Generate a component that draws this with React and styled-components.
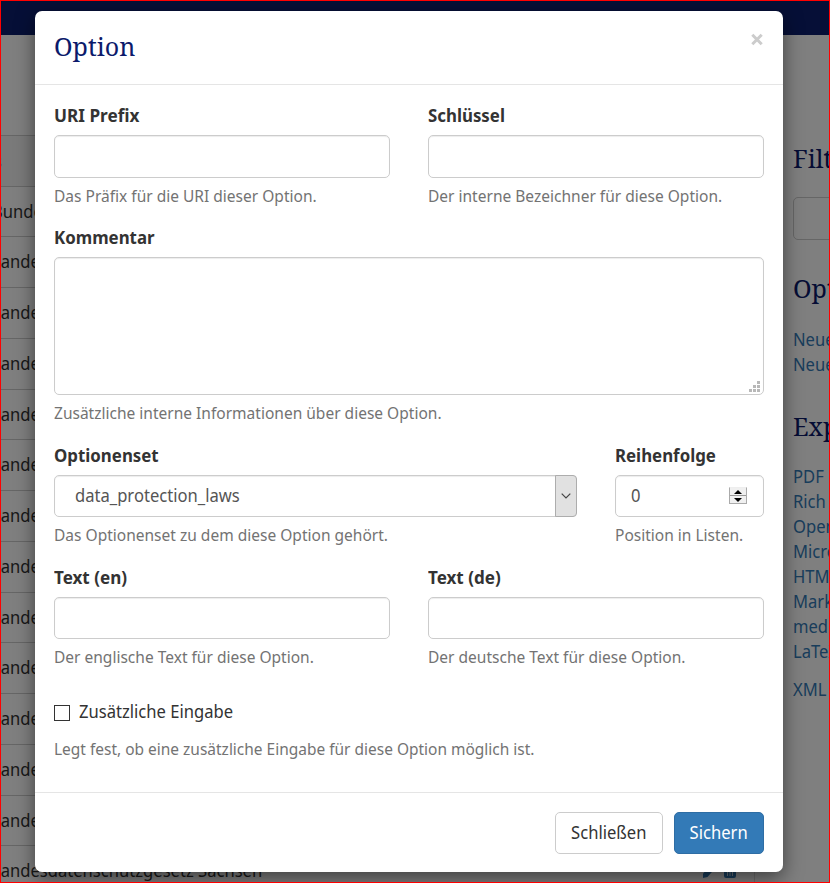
import React from "react";
import styled, { createGlobalStyle } from "styled-components";

const Global = createGlobalStyle`
  * { box-sizing: border-box; }
  html, body { margin: 0; padding: 0; }
  body {
    font-family: "Droid Sans", "Noto Sans", "Open Sans", sans-serif;
    font-size: 17.5px;
    line-height: 25px;
    color: #333;
    overflow: hidden;
  }
`;

const Screen = styled.div`
  position: relative;
  width: 830px;
  height: 883px;
  overflow: hidden;
  background: #fff;
  &::after {
    content: "";
    position: absolute;
    inset: 0;
    border: 1px solid #f00;
  }
`;

const Fit = styled.span`
  display: inline-block;
  white-space: nowrap;
  transform: scaleX(${(p) => p.$x || 0.948});
  transform-origin: ${(p) => p.$origin || "left"} center;
`;

const Navbar = styled.div`
  height: 35px;
  background: #0d1e6e;
`;

const Columns = styled.div`
  display: grid;
  grid-template-columns: 755px 1fr;
  column-gap: 38px;
`;

const Table = styled.div`
  margin-top: 100px;
  border-right: 1px solid #ddd;
`;

const TableRow = styled.div`
  display: flex;
  justify-content: space-between;
  height: ${(p) => p.$h}px;
  padding: 12px 18px 0 0;
  border-top: 1px solid #ccc;
  background: ${(p) => (p.$head ? "#f5f5f5" : "#fff")};
  white-space: nowrap;
`;

const Cell = styled.span`
  margin-left: ${(p) => p.$shift}px;
  padding-top: ${(p) => (p.$bold ? 1 : 0)}px;
  font-weight: ${(p) => (p.$bold ? 700 : 400)};
`;

const RowIcons = styled.span`
  display: flex;
  gap: 8px;
  padding-top: 6px;
  color: #337ab7;
`;

const Sidebar = styled.aside`
  padding-top: 107px;
  overflow: hidden;
`;

const SideTitle = styled.h2`
  margin: 0 0 ${(p) => p.$gap}px;
  font: 400 25px/32px "Droid Serif", "Noto Serif", "DejaVu Serif Condensed", "DejaVu Serif", serif;
  color: #0c1a6b;
`;

const SideInput = styled.div`
  width: 180px;
  height: 43px;
  margin-bottom: 32px;
  border: 1px solid #ccc;
  border-radius: 5px;
`;

const LinkList = styled.div`
  margin-bottom: ${(p) => p.$gap}px;
`;

const SideLink = styled.a`
  display: block;
  color: #337ab7;
  height: 25px;
`;

const Backdrop = styled.div`
  position: absolute;
  inset: 0;
  background: rgba(0, 0, 0, 0.5);
`;

const Dialog = styled.div`
  position: absolute;
  left: 35px;
  top: 11px;
  width: 748px;
  height: 861px;
  background: #fff;
  border-radius: 7px;
  box-shadow: 0 6px 19px rgba(0, 0, 0, 0.5);
`;

const DialogHeader = styled.header`
  display: flex;
  justify-content: space-between;
  height: 74px;
  padding: 19px 19px 0;
  border-bottom: 1px solid #e5e5e5;
`;

const Title = styled.h1`
  margin: 0;
  font: 400 25px/32px "Droid Serif", "Noto Serif", "DejaVu Serif Condensed", "DejaVu Serif", serif;
  color: #0c1a6b;
`;

const Close = styled.button`
  width: 14px;
  height: 14px;
  margin-top: 2px;
  padding: 0;
  border: 0;
  background: none;
  svg { display: block; }
`;

const Body = styled.div`
  height: 707px;
  padding: 18px 19px 0;
`;

const FormRow = styled.div`
  display: grid;
  grid-template-columns: ${(p) => p.$cols || "1fr"};
  column-gap: 38px;
  height: ${(p) => p.$h}px;
`;

const Label = styled.label`
  display: block;
  height: 25px;
  margin-bottom: 7px;
  font-weight: 700;
`;

const Control = styled.div`
  display: flex;
  position: relative;
  align-items: center;
  justify-content: space-between;
  height: ${(p) => p.$h || 42}px;
  padding-left: ${(p) => p.$pad || 15}px;
  border: 1px solid #ccc;
  border-radius: 5px;
  box-shadow: inset 0 1px 1px rgba(0, 0, 0, 0.075);
  color: #555;
`;

const Value = styled(Fit)`
  padding-bottom: 2px;
`;

const Help = styled.div`
  margin-top: ${(p) => p.$gap || 6}px;
  height: 25px;
  font-size: 16px;
  color: #737373;
`;

const Grip = styled.svg`
  position: absolute;
  right: 3px;
  bottom: 2px;
`;

const SelectArrow = styled.span`
  display: flex;
  align-items: center;
  justify-content: center;
  width: 22px;
  height: 42px;
  margin: -1px;
  border: 1px solid #adadad;
  border-radius: 0 4px 4px 0;
  background: #e1e1e1;
`;

const Spinner = styled.span`
  display: flex;
  flex-direction: column;
  width: 18px;
  height: 17px;
  margin: 0 16px 1px 0;
  border: 1px solid #aaa;
  border-top-color: #eee;
  background: #f0f0f0;
`;

const SpinButton = styled.span`
  display: flex;
  align-items: center;
  justify-content: center;
  flex: 1;
  & + & {
    border-top: 1px solid #999;
  }
`;

const CheckRow = styled.div`
  display: flex;
  align-items: center;
  gap: 9px;
  height: 25px;
  margin-top: 12px;
`;

const CheckBox = styled.span`
  width: 16px;
  height: 16px;
  margin-top: 2px;
  border: 1px solid #333;
  background: #fff;
`;

const Footer = styled.footer`
  display: flex;
  justify-content: flex-end;
  gap: 11px;
  height: 80px;
  padding: 19px 19px 0;
  border-top: 1px solid #e5e5e5;
`;

const Button = styled.button`
  display: flex;
  align-items: center;
  justify-content: center;
  width: ${(p) => p.$w}px;
  height: 42px;
  padding: 0 1px 2px 0;
  border: 1px solid ${(p) => (p.$primary ? "#2e6da4" : "#ccc")};
  border-radius: 5px;
  background: ${(p) => (p.$primary ? "#337ab7" : "#fff")};
  color: ${(p) => (p.$primary ? "#fff" : "#333")};
  font: inherit;
`;

function Field({ label, labelScale = 0.963, help, controlHeight, pad, children }) {
  return (
    <div>
      <Label><Fit $x={labelScale}>{label}</Fit></Label>
      <Control $h={controlHeight} $pad={pad}>{children}</Control>
      <Help><Fit $x={0.97}>{help}</Fit></Help>
    </div>
  );
}

const rowHeights = [50, 51, 51, 51, 50, 51, 51, 51, 50, 51, 51, 51, 50, 51];
const exportsList = ["PDF", "Rich Text Format", "Open Office", "Microsoft Office", "HTML", "Markdown", "mediawiki", "LaTeX"];

function Background() {
  return (
    <>
      <Navbar />
      <Columns>
        <Table>
          <TableRow $head $h={51}><Cell $bold $shift={-7}>s</Cell></TableRow>
          {rowHeights.map((h, i) => (
            <TableRow key={i} $h={h}>
              <Cell $shift={-8}>
                <Fit>{i === 0 ? "Bundesdatenschutzgesetz" : "Landesdatenschutzgesetz Sachsen"}</Fit>
              </Cell>
              <RowIcons>
                <svg width="14" height="14" viewBox="0 0 14 14" fill="currentColor">
                  <path d="M9.5 1 13 4.5 5.5 13 1 14 1 9.5Z" />
                </svg>
                <svg width="12" height="14" viewBox="0 0 12 14">
                  <path d="M0 2h12M4 1h4" stroke="currentColor" strokeWidth="2" />
                  <path d="M0 4h12v8q0 2-2 2H2q-2 0-2-2Z" fill="currentColor" />
                  <path d="M3.5 5v7M6 5v7M8.5 5v7" stroke="#fff" strokeWidth=".8" />
                </svg>
              </RowIcons>
            </TableRow>
          ))}
        </Table>
        <Sidebar>
          <SideTitle $gap={23}><Fit $x={1}>Filter</Fit></SideTitle>
          <SideInput />
          <SideTitle $gap={23}><Fit $x={1}>Optionen</Fit></SideTitle>
          <LinkList $gap={33}>
            <SideLink><Fit>Neues Optionenset</Fit></SideLink>
            <SideLink><Fit>Neue Option</Fit></SideLink>
          </LinkList>
          <SideTitle $gap={22}><Fit $x={1}>Export</Fit></SideTitle>
          <LinkList $gap={13}>
            {exportsList.map((t) => <SideLink key={t}><Fit>{t}</Fit></SideLink>)}
          </LinkList>
          <SideLink><Fit>XML</Fit></SideLink>
        </Sidebar>
      </Columns>
    </>
  );
}

export default function App() {
  return (
    <>
      <Global />
      <Screen>
        <Background />
        <Backdrop />
        <Dialog role="dialog">
          <DialogHeader>
            <Title><Fit $x={1}>Option</Fit></Title>
            <Close aria-label="close">
              <svg width="14" height="14" viewBox="0 0 14 14">
                <path d="M2.3 2.8 11.7 12.2M11.7 2.8 2.3 12.2" stroke="#ccc" strokeWidth="3" />
              </svg>
            </Close>
          </DialogHeader>
          <Body>
            <FormRow $h={122} $cols="1fr 1fr">
              <Field label="URI Prefix" labelScale={0.982} help="Das Präfix für die URI dieser Option." controlHeight={43} />
              <Field label="Schlüssel" help="Der interne Bezeichner für diese Option." controlHeight={43} />
            </FormRow>
            <FormRow $h={218}>
              <Field label="Kommentar" help="Zusätzliche interne Informationen über diese Option." controlHeight={138}>
                <Grip width="11" height="11" fill="#b8b8b8">
                  {[[8, 0], [4, 4], [8, 4], [0, 8], [4, 8], [8, 8]].map(([x, y]) => (
                    <rect key={`${x}-${y}`} x={x} y={y} width="3" height="3" />
                  ))}
                </Grip>
              </Field>
            </FormRow>
            <FormRow $h={122} $cols="523px 149px">
              <Field label="Optionenset" help="Das Optionenset zu dem diese Option gehört." pad={20}>
                <Value>data_protection_laws</Value>
                <SelectArrow>
                  <svg width="10" height="6" fill="none" stroke="#444" strokeWidth="1.2">
                    <path d="M.7.7 5 5 9.3.7" />
                  </svg>
                </SelectArrow>
              </Field>
              <Field label="Reihenfolge" help="Position in Listen.">
                <Value>0</Value>
                <Spinner>
                  <SpinButton><svg width="8" height="4"><path d="M0 4 4 0l4 4Z" /></svg></SpinButton>
                  <SpinButton><svg width="8" height="4"><path d="M0 0 4 4l4-4Z" /></svg></SpinButton>
                </Spinner>
              </Field>
            </FormRow>
            <FormRow $h={122} $cols="1fr 1fr">
              <Field label="Text (en)" labelScale={0.975} help="Der englische Text für diese Option." />
              <Field label="Text (de)" labelScale={0.975} help="Der deutsche Text für diese Option." />
            </FormRow>
            <CheckRow>
              <CheckBox />
              <Fit>Zusätzliche Eingabe</Fit>
            </CheckRow>
            <Help $gap={13}><Fit $x={0.967}>Legt fest, ob eine zusätzliche Eingabe für diese Option möglich ist.</Fit></Help>
          </Body>
          <Footer>
            <Button $w={108}><Fit $origin="center">Schließen</Fit></Button>
            <Button $w={90} $primary><Fit $origin="center">Sichern</Fit></Button>
          </Footer>
        </Dialog>
      </Screen>
    </>
  );
}
